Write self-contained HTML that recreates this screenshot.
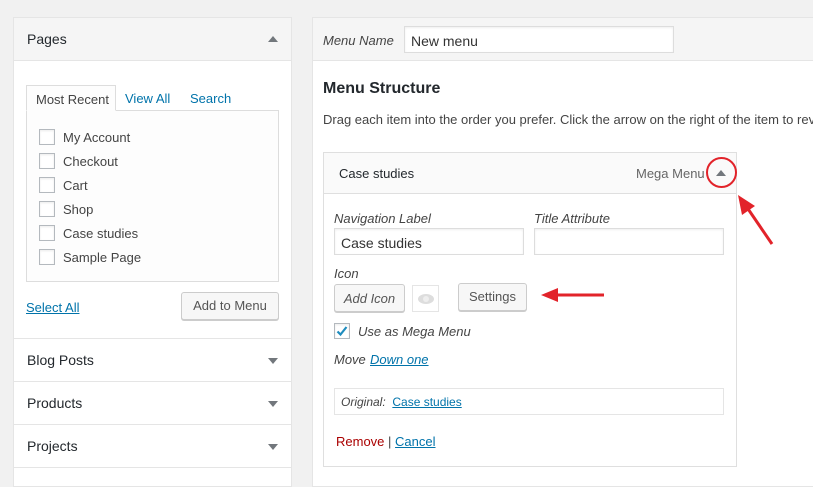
<!DOCTYPE html><html><head><style>
*{box-sizing:border-box;margin:0;padding:0}
body{width:813px;height:475px;overflow:hidden;background:#f1f1f1;font-family:"Liberation Sans",sans-serif;font-size:13px;color:#444;position:relative}
.a{position:absolute}
.lnk{color:#0073aa;text-decoration:underline}
.cb{position:absolute;width:16px;height:16px;border:1px solid #b4b9be;background:#fff;box-shadow:inset 0 1px 2px rgba(0,0,0,.08)}
.btn{position:absolute;border:1px solid #ccc;background:#f7f7f7;border-radius:3px;box-shadow:0 1px 0 #ccc;color:#555;text-align:center}
.inp{position:absolute;border:1px solid #ddd;background:#fff;box-shadow:inset 0 1px 2px rgba(0,0,0,.07)}
.tri{position:absolute;width:0;height:0;border-left:5px solid transparent;border-right:5px solid transparent}
.hd{position:absolute;left:27px;font-size:14px;color:#23282d}
.sep{position:absolute;left:13px;width:279px;height:1px;background:#e5e5e5}
</style></head><body>
<div class="a" style="left:13px;top:17px;width:279px;height:470px;background:#fff;border:1px solid #e5e5e5"></div>
<div class="a" style="left:13px;top:17px;width:279px;height:44px;background:#f5f5f5;border:1px solid #e5e5e5"></div>
<div class="hd" style="top:31px">Pages</div>
<div class="tri" style="left:268px;top:36px;border-bottom:6px solid #72777c"></div>
<div class="a" style="left:26px;top:110px;width:253px;height:172px;border:1px solid #ddd;background:#fdfdfd"></div>
<div class="a" style="left:26px;top:85px;width:90px;height:26px;border:1px solid #ddd;border-bottom:1px solid #fdfdfd;background:#fdfdfd;padding:6px 0 0 9px">Most Recent</div>
<div class="a" style="left:125px;top:91px;color:#0073aa">View All</div>
<div class="a" style="left:190px;top:91px;color:#0073aa">Search</div>
<div class="cb" style="left:39px;top:129px"></div><div class="a" style="left:63px;top:130px">My Account</div>
<div class="cb" style="left:39px;top:153px"></div><div class="a" style="left:63px;top:154px">Checkout</div>
<div class="cb" style="left:39px;top:177px"></div><div class="a" style="left:63px;top:178px">Cart</div>
<div class="cb" style="left:39px;top:201px"></div><div class="a" style="left:63px;top:202px">Shop</div>
<div class="cb" style="left:39px;top:225px"></div><div class="a" style="left:63px;top:226px">Case studies</div>
<div class="cb" style="left:39px;top:249px"></div><div class="a" style="left:63px;top:250px">Sample Page</div>
<div class="a lnk" style="left:26px;top:300px">Select All</div>
<div class="btn" style="left:181px;top:292px;width:98px;height:28px;line-height:26px">Add to Menu</div>
<div class="sep" style="top:338px"></div><div class="hd" style="top:352px">Blog Posts</div><div class="tri" style="left:268px;top:358px;border-top:6px solid #72777c"></div>
<div class="sep" style="top:381px"></div><div class="hd" style="top:395px">Products</div><div class="tri" style="left:268px;top:401px;border-top:6px solid #72777c"></div>
<div class="sep" style="top:424px"></div><div class="hd" style="top:438px">Projects</div><div class="tri" style="left:268px;top:444px;border-top:6px solid #72777c"></div>
<div class="sep" style="top:467px"></div>

<div class="a" style="left:312px;top:17px;width:520px;height:470px;background:#fff;border:1px solid #e5e5e5"></div>
<div class="a" style="left:312px;top:17px;width:520px;height:44px;background:#f5f5f5;border:1px solid #e5e5e5"></div>
<div class="a" style="left:323px;top:33px;font-style:italic">Menu Name</div>
<div class="inp" style="left:404px;top:26px;width:270px;height:27px;padding:6px 0 0 6px;color:#333;font-size:14px">New menu</div>
<div class="a" style="left:323px;top:80px;font-size:16px;font-weight:bold;color:#23282d">Menu Structure</div>
<div class="a" style="left:323px;top:112px;white-space:nowrap">Drag each item into the order you prefer. Click the arrow on the right of the item to reveal</div>
<div class="a" style="left:323px;top:152px;width:414px;height:315px;border:1px solid #dfdfdf;background:#fff"></div>
<div class="a" style="left:323px;top:152px;width:414px;height:42px;border:1px solid #dfdfdf;background:#fafafa"></div>
<div class="a" style="left:339px;top:166px;color:#23282d">Case studies</div>
<div class="a" style="left:636px;top:166px;color:#666">Mega Menu</div>
<div class="tri" style="left:716px;top:170px;border-bottom:6px solid #72777c"></div>
<div class="a" style="left:706px;top:157px;width:31px;height:31px;border:2px solid #e2232a;border-radius:50%"></div>
<div class="a" style="left:334px;top:211px;font-style:italic">Navigation Label</div>
<div class="a" style="left:534px;top:211px;font-style:italic">Title Attribute</div>
<div class="inp" style="left:334px;top:228px;width:190px;height:27px;padding:6px 0 0 6px;color:#333;font-size:14px">Case studies</div>
<div class="inp" style="left:534px;top:228px;width:190px;height:27px"></div>
<div class="a" style="left:334px;top:266px;font-style:italic">Icon</div>
<div class="btn" style="left:334px;top:284px;width:71px;height:28px;line-height:27px;font-style:italic">Add Icon</div>
<div class="a" style="left:412px;top:285px;width:27px;height:27px;border:1px solid #e5e5e5;background:#fff"><svg width="27" height="27"><ellipse cx="13" cy="13" rx="8" ry="5" fill="#ddd"/><circle cx="13" cy="13" r="3" fill="#eee"/></svg></div>
<div class="btn" style="left:458px;top:283px;width:69px;height:28px;line-height:26px">Settings</div>
<div class="cb" style="left:334px;top:323px"><svg width="14" height="14" style="position:absolute;left:0;top:0"><path d="M2.5 7.5l3 3 6-7.5" stroke="#1e8cbe" stroke-width="2.2" fill="none"/></svg></div>
<div class="a" style="left:358px;top:324px;font-style:italic">Use as Mega Menu</div>
<div class="a" style="left:334px;top:352px;font-style:italic">Move</div>
<div class="a lnk" style="left:370px;top:352px;font-style:italic">Down one</div>
<div class="a" style="left:334px;top:388px;width:390px;height:27px;border:1px solid #e5e5e5;padding:6px 0 0 6px;font-size:12px"><i>Original:</i>&nbsp; <span class="lnk">Case studies</span></div>
<div class="a" style="left:336px;top:434px;color:#a00">Remove <span style="color:#444">|</span> <span class="lnk">Cancel</span></div>
<svg class="a" style="left:0;top:0" width="813" height="475"><g stroke="#e2232a" stroke-width="3" fill="#e2232a">
<line x1="772" y1="244" x2="744" y2="203"/><polygon points="738,195 755,206 742,215" stroke="none"/>
<line x1="604" y1="295" x2="552" y2="295"/><polygon points="541,295 558,288 558,302" stroke="none"/></g></svg>
</body></html>
